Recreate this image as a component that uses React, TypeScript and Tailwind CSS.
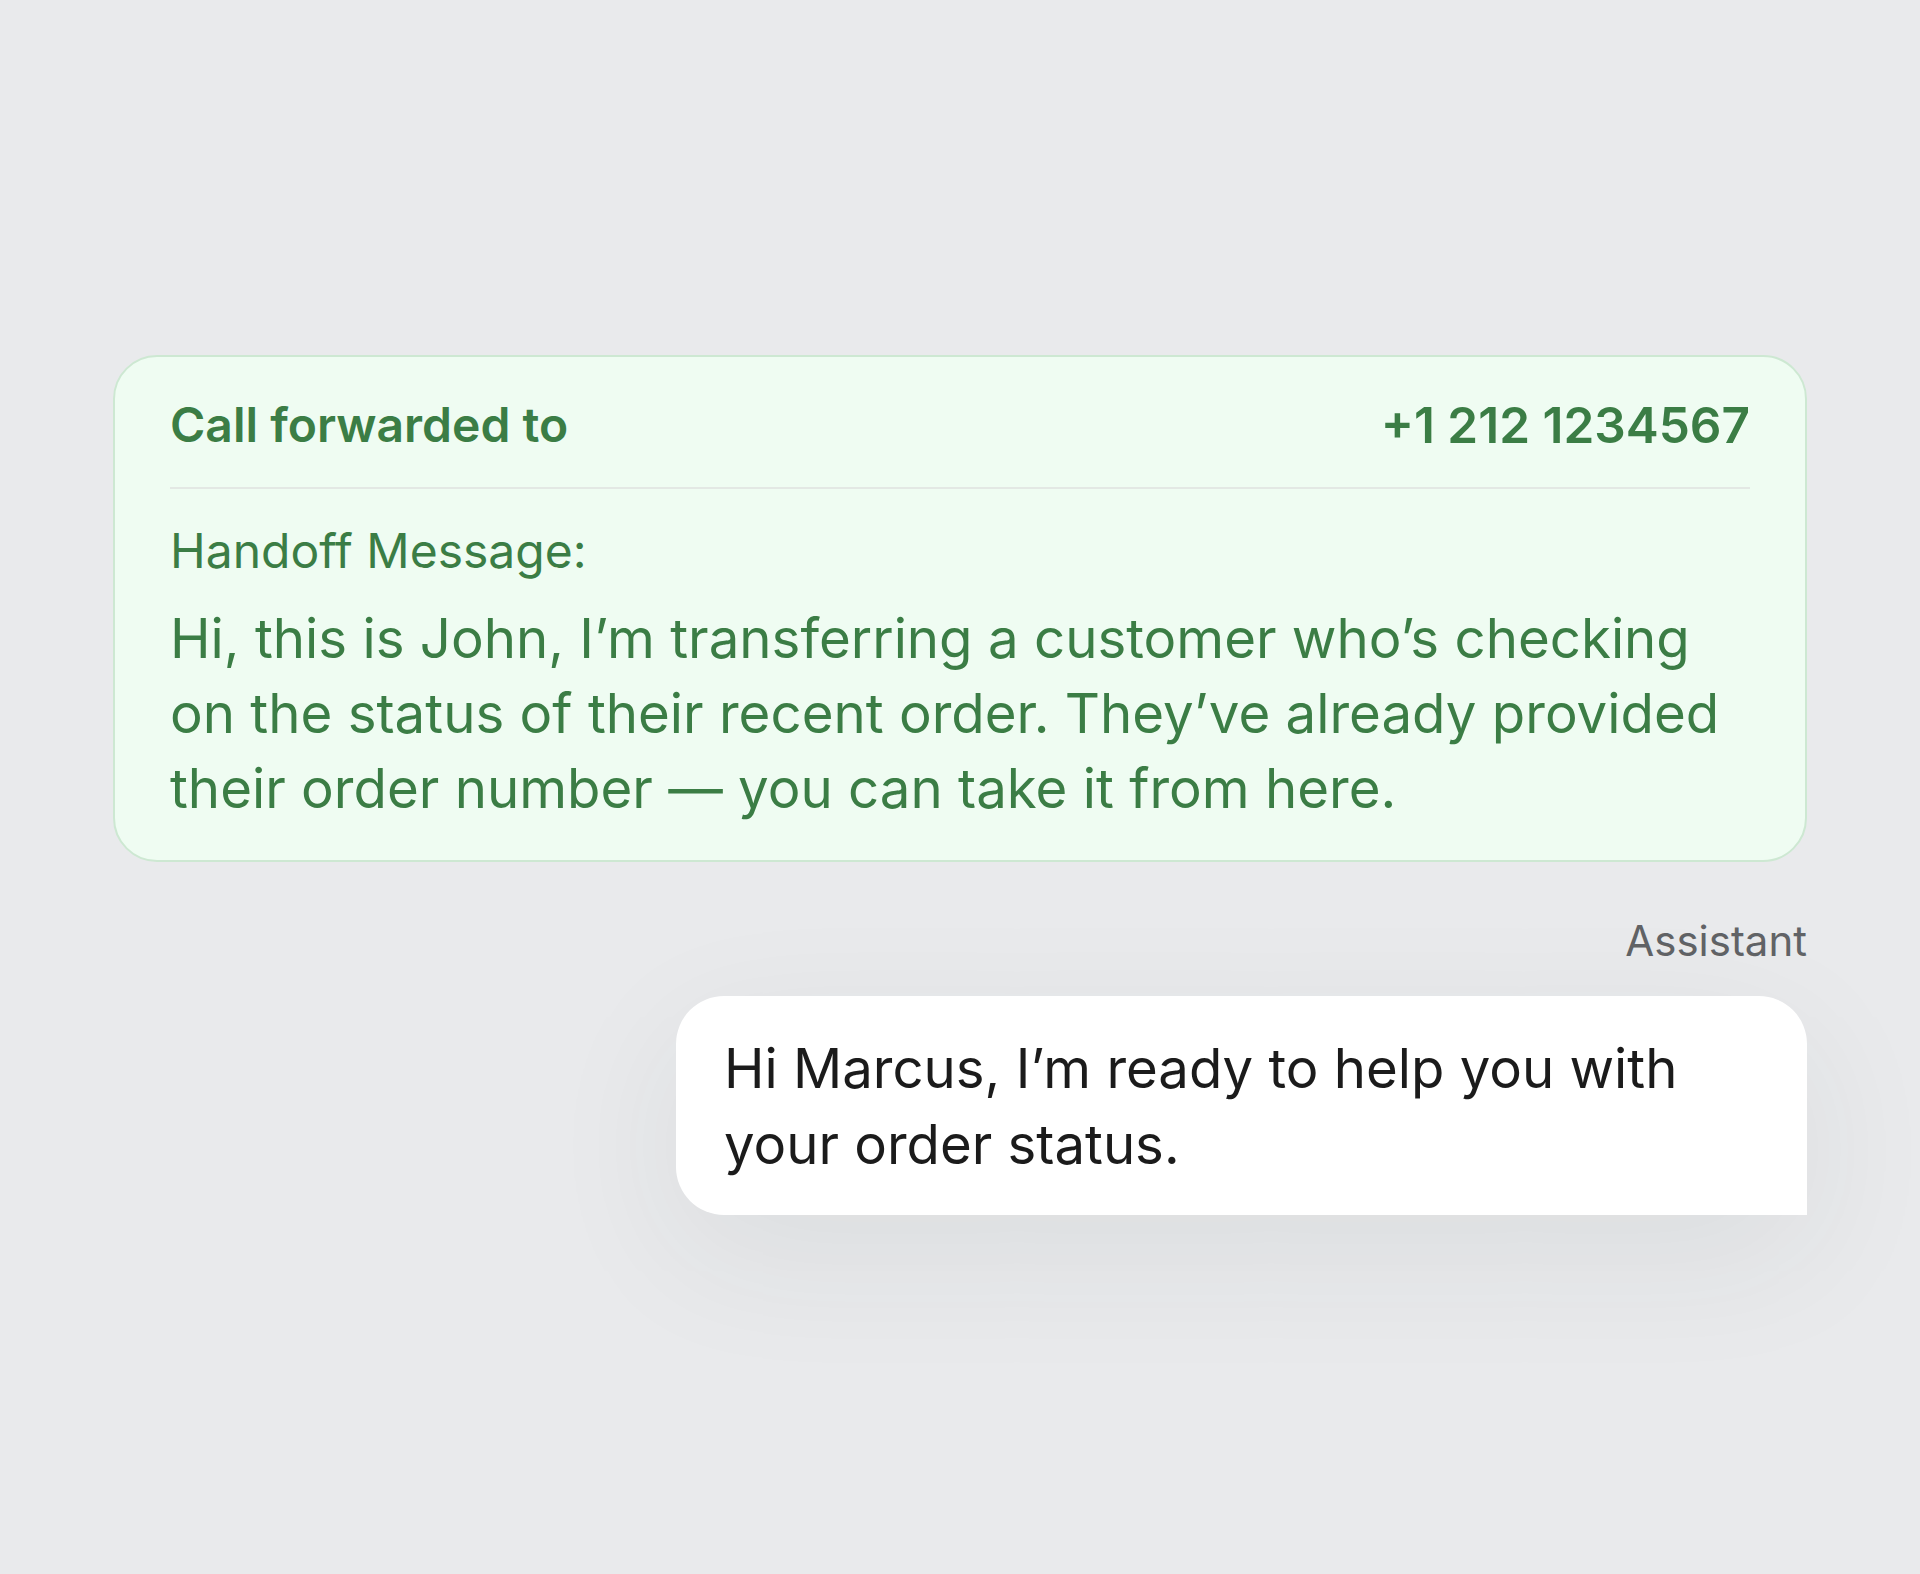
const green = "text-[#3b7d45]";

const HandoffCard = () => {
  return (
    <div className="rounded-[44px] border-2 border-[#cde8d2] bg-[#effcf2] px-[55px] pt-[39px] pb-[34px]">
      <div className={`flex items-center justify-between text-[48px] leading-[58px] font-semibold ${green}`}>
        <span>Call forwarded to</span>
        <span className="text-[49.5px]">+1 212 1234567</span>
      </div>
      <div className="mt-[33px] h-[2px] bg-[#e3e8e4]"></div>
      <p className={`mt-[33px] text-[48px] leading-[58px] ${green}`}>Handoff Message:</p>
      <p className={`mt-[21px] text-[54.6px] leading-[75px] whitespace-nowrap ${green}`}>
        Hi, this is John, I’m transferring a customer who’s checking
        <br />
        on the status of their recent order. They’ve already provided
        <br />
        their order number — you can take it from here.
      </p>
    </div>
  );
};

const AssistantBubble = () => {
  return (
    <div className="flex flex-col items-end">
      <span className="text-[42px] leading-[50px] text-[#616366]">Assistant</span>
      <div className="mt-[30px] w-[1131px] rounded-t-[48px] rounded-bl-[48px] bg-white px-[48px] pt-[34px] pb-[33px] shadow-[0_40px_140px_rgba(40,50,60,0.07)]">
        <p className="text-[54.5px] leading-[76px] text-[#1b1b1b] whitespace-nowrap">
          Hi Marcus, I’m ready to help you with
          <br />
          your order status.
        </p>
      </div>
    </div>
  );
};

export default function App() {
  return (
    <div
      className="flex min-h-screen items-center justify-center bg-[#e9eaec] pb-[4px]"
      style={{ fontFamily: "Inter, 'Noto Sans', sans-serif" }}
    >
      <div className="flex w-[1694px] flex-col gap-[54px]">
        <HandoffCard />
        <AssistantBubble />
      </div>
    </div>
  );
}
